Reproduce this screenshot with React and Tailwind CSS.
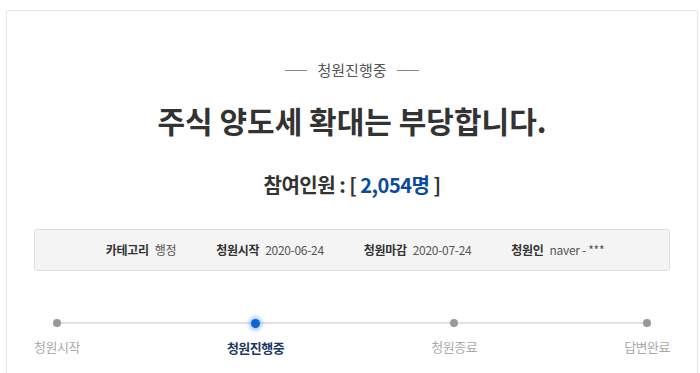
export default function App() {
  const steps = [
    { label: "청원시작", active: false },
    { label: "청원진행중", active: true },
    { label: "청원종료", active: false },
    { label: "답변완료", active: false },
  ];

  const info = [
    { k: "카테고리", v: "행정" },
    { k: "청원시작", v: "2020-06-24" },
    { k: "청원마감", v: "2020-07-24" },
    { k: "청원인", v: "naver - ***" },
  ];

  return (
    <div
      className="h-[373px] w-[700px] overflow-hidden bg-white pt-[10px] pl-[6px] pr-[2px]"
      style={{ fontFamily: '"Noto Sans CJK KR", "Noto Sans", sans-serif' }}
    >
      <div className="h-[380px] rounded-[3px] border border-[#e6e6e6] px-[27px] pt-[48px]">
        {/* status */}
        <div className="flex items-center justify-center gap-[10px] text-[15px] leading-[22px] text-[#555]">
          <span className="h-px w-[22px] bg-[#888]" />
          <span>청원진행중</span>
          <span className="h-px w-[22px] bg-[#888]" />
        </div>

        <h1 className="mt-[20px] text-center text-[30px] font-bold leading-[38px] text-[#333]">
          주식 양도세 확대는 부당합니다.
        </h1>

        <div className="mt-[32px] text-center text-[20px] font-bold leading-[28px] tracking-[-0.5px] text-[#333]">
          참여인원 : [ <span className="text-[#0b4a9e]">2,054명</span> ]
        </div>

        {/* info box */}
        <div className="mt-[30px] flex h-[42px] items-center justify-center gap-[40px] rounded-[3px] border border-[#dedede] bg-[#f4f4f4] pl-[6px] text-[12px] tracking-[-0.3px]">
          {info.map((it) => (
            <div key={it.k} className="flex items-center gap-[6px]">
              <span className="font-bold text-[#333]">{it.k}</span>
              <span className="text-[#555]">{it.v}</span>
            </div>
          ))}
        </div>

        {/* progress */}
        <div className="relative mt-[48px] flex justify-between">
          <div className="absolute left-[20px] right-[20px] top-[3px] h-[2px] bg-[#e2e2e2]" />
          {steps.map((s) => (
            <div key={s.label} className="relative flex flex-col items-center">
              {s.active ? (
                <span className="h-[9px] w-[9px] rounded-full bg-[#0a64d6] shadow-[0_0_4px_2px_rgba(30,120,240,0.45)] -mt-[0.5px]" />
              ) : (
                <span className="h-[8px] w-[8px] rounded-full bg-[#999]" />
              )}
              <span
                className={
                  s.active
                    ? "mt-[11px] text-[13px] font-bold leading-[18px] tracking-[-0.5px] text-[#1d3766]"
                    : "mt-[11px] text-[13px] leading-[18px] tracking-[-0.5px] text-[#aaa]"
                }
              >
                {s.label}
              </span>
            </div>
          ))}
        </div>
      </div>
    </div>
  );
}
